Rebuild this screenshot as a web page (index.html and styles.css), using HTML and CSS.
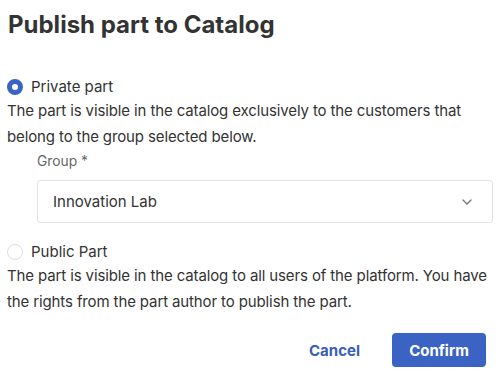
FILE: index.html
```html
<!DOCTYPE html>
<html lang="en">
<head>
  <meta charset="UTF-8">
  <title>Publish part to Catalog</title>
  <link rel="stylesheet" href="styles.css">
</head>
<body>
  <div class="dialog">
    <h1 class="title">Publish part to Catalog</h1>

    <div class="option">
      <label class="radio-row">
        <span class="radio checked"></span>
        Private part
      </label>
      <p class="desc">The part is visible in the catalog exclusively to the customers that belong to the group selected below.</p>
      <div class="field">
        <div class="field-label">Group *</div>
        <div class="select">
          <span>Innovation Lab</span>
          <svg class="chevron" width="10" height="6" viewBox="0 0 10 6">
            <path d="M1 1l4 4 4-4" fill="none" stroke="#777" stroke-width="1.4" stroke-linecap="round" stroke-linejoin="round"/>
          </svg>
        </div>
      </div>
    </div>

    <div class="option">
      <label class="radio-row">
        <span class="radio"></span>
        Public Part
      </label>
      <p class="desc">The part is visible in the catalog to all users of the platform. You have the rights from the part author to publish the part.</p>
    </div>

    <div class="actions">
      <button class="btn-link">Cancel</button>
      <button class="btn-primary">Confirm</button>
    </div>
  </div>
</body>
</html>
```

FILE: styles.css
```css
/* Reset */
body, html {
  margin: 0;
  padding: 0;
  background: #fff;
  font-family: 'Inter', 'Liberation Sans', sans-serif;
  color: #333;
}

.dialog {
  padding: 10px 3px 0 7px;
}

.title {
  font-size: 24px;
  font-weight: bold;
  line-height: 30px;
  margin: 0 0 37px 1px;
}

.radio-row {
  display: flex;
  align-items: center;
  gap: 8px;
  font-size: 15px;
  line-height: 20px;
}

.radio {
  width: 16px;
  height: 16px;
  box-sizing: border-box;
  border-radius: 50%;
  border: 1px solid #ddd;
  background: #fff;
}

.radio.checked {
  border: 5px solid #3a63c3;
}

.desc {
  margin: 1px 0 0;
  font-size: 15px;
  line-height: 26px;
  letter-spacing: -0.12px;
}

.field {
  margin: 2px 0 0 30px;
}

.field-label {
  font-size: 13.8px;
  color: #666;
  line-height: 18px;
  margin-bottom: 10px;
}

.select {
  display: flex;
  align-items: center;
  justify-content: space-between;
  height: 43px;
  box-sizing: border-box;
  border: 1px solid #e3e3e3;
  border-radius: 3px;
  padding: 0 20px 0 15px;
  font-size: 15px;
}

.option + .option {
  margin-top: 19px;
}

.actions {
  display: flex;
  justify-content: flex-end;
  align-items: center;
  gap: 32px;
  margin-top: 18px;
  padding-right: 7px;
}

.btn-link {
  padding: 0;
  background: none;
  border: none;
  color: #3a5fb8;
  font: bold 15px 'Inter', 'Liberation Sans', sans-serif;
  cursor: pointer;
}

.btn-primary {
  width: 94px;
  height: 34px;
  background: #3a63c3;
  color: #fff;
  border: none;
  border-radius: 4px;
  font: bold 15px 'Inter', 'Liberation Sans', sans-serif;
  cursor: pointer;
}
```
